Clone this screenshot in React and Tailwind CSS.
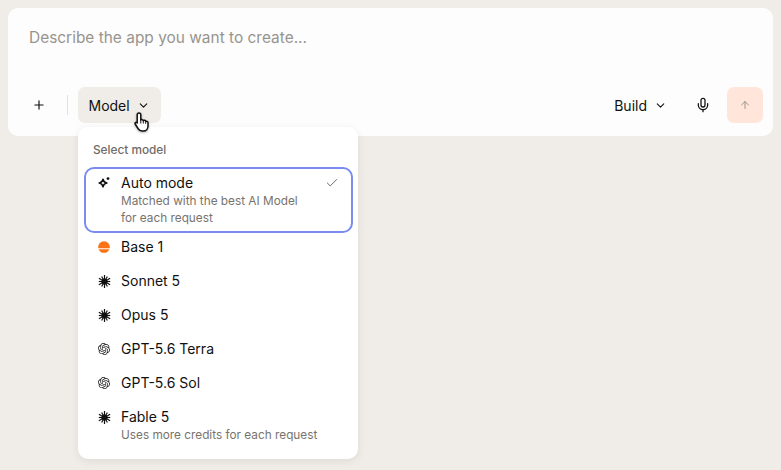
import React from "react";
import { Plus, ChevronDown, Mic, ArrowUp, Check } from "lucide-react";
import { SiOpenai } from "react-icons/si";

function Sparkle() {
  return (
    <svg width="14" height="14" viewBox="0 0 14 14" fill="none">
      <path d="M6 3.2 C6.4 5.6 7.4 6.6 9.8 7 C7.4 7.4 6.4 8.4 6 10.8 C5.6 8.4 4.6 7.4 2.2 7 C4.6 6.6 5.6 5.6 6 3.2 Z" stroke="#111" strokeWidth="1.6" strokeLinejoin="round" />
      <circle cx="11" cy="2.6" r="1.4" fill="#111" />
    </svg>
  );
}

function Orange() {
  return (
    <svg width="12" height="12" viewBox="0 0 12 12">
      <path d="M0.35 7.3 A5.8 5.8 0 1 1 11.65 7.3 Z" fill="#f97316" />
      <path d="M0.63 8.2 H11.37 A5.8 5.8 0 0 1 0.63 8.2 Z" fill="#f97316" />
    </svg>
  );
}

function Burst() {
  const rays = [0, 30, 60, 90, 120, 150, 180, 210, 240, 270, 300, 330];
  return (
    <svg width="13" height="13" viewBox="0 0 12 12">
      <circle cx="6" cy="6" r="2.8" fill="#111" />
      {rays.map((a) => (
        <line key={a} x1="6" y1="6" x2="6" y2={a % 60 === 0 ? 0 : 0.7} stroke="#111" strokeWidth="1.1" transform={`rotate(${a} 6 6)`} />
      ))}
    </svg>
  );
}

function Gpt() {
  return <SiOpenai size={12} color="#222" />;
}

function HandCursor({ className }) {
  return (
    <svg width="15" height="20" viewBox="0 0 15 20" className={className}>
      <path
        d="M5 1 C6 1 6.8 1.8 6.8 2.8 V8 C7.5 7.4 9 7.5 9.3 8.5 C10 8 11.4 8.2 11.7 9.3 C12.5 8.9 14 9.3 14 10.8 V14 C14 17 12 19 9.5 19 H8 C6 19 5 18 4 16.5 L1.2 12 C0.6 11 1.8 9.8 2.8 10.6 L3.2 11 V2.8 C3.2 1.8 4 1 5 1 Z"
        fill="#fff"
        stroke="#111"
        strokeWidth="1.5"
        strokeLinejoin="round"
      />
      <path d="M6.8 8 V11.5 M9.3 8.5 V11.5 M11.7 9.3 V11.8" stroke="#111" strokeWidth="1" fill="none" />
    </svg>
  );
}

function Row({ icon, name, sub, right }) {
  return (
    <div className="flex gap-[10px]">
      <div className="w-[14px] h-[20px] flex items-center justify-center shrink-0">{icon}</div>
      <div>
        <div className="text-[14px] leading-[20px] text-[#111]">{name}</div>
        {sub && <div className="text-[11.8px] leading-[17px] text-[#77736e]">{sub}</div>}
      </div>
      {right && <div className="ml-auto h-[20px] flex items-center">{right}</div>}
    </div>
  );
}

function Item(props) {
  return (
    <div className="px-[19px] py-[7px]">
      <Row {...props} />
    </div>
  );
}

export default function App() {
  return (
    <div className="relative w-[781px] h-[470px] overflow-hidden bg-[#f0ede8] p-2 font-['Inter',sans-serif]">
      {/* Prompt box */}
      <div className="h-[128px] bg-[#fdfdfd] rounded-[10px] pl-[15px] pr-[10px] pt-[19px] pb-[13px] flex flex-col justify-between">
        <div className="px-[6px] text-[15.45px] leading-[22px] text-[#98948e]">Describe the app you want to create...</div>
        <div className="flex items-center">
          <div className="w-[32px] h-[36px] flex items-center justify-center">
            <Plus size={14} strokeWidth={2} color="#111" />
          </div>
          <div className="w-px h-[20px] bg-[#e4e2de] ml-[12px] mr-[10px]" />
          <div className="h-[36px] w-[83px] rounded-[7px] bg-[#f0ede8] flex items-center pl-[10.5px] gap-[7px] text-[14px] text-[#111]">
            Model <ChevronDown size={13} strokeWidth={2} />
          </div>
          <div className="ml-auto flex items-center text-[14px] text-[#111]">
            <span>Build</span>
            <ChevronDown size={13} strokeWidth={2} className="ml-[7px]" />
            <Mic size={16} strokeWidth={1.9} className="ml-[28px]" />
            <div className="ml-[16px] w-[36px] h-[36px] rounded-[7px] bg-[#ffe5da] flex items-center justify-center">
              <ArrowUp size={12} strokeWidth={2} color="#9a9490" />
            </div>
          </div>
        </div>
      </div>

      {/* Model dropdown */}
      <div className="absolute left-[78px] top-[127px] w-[280px] h-[332px] bg-white rounded-[10px] shadow-[0_2px_8px_rgba(0,0,0,0.08)] pt-[13px]">
        <div className="px-[15px] text-[11.8px] leading-[20px] font-medium text-[#6f6b66]">Select model</div>
        <div className="ml-[6px] mt-[7px] h-[66px] w-[269px] border-2 border-[#7b8cf0] rounded-[10px] pl-[11px] pr-[12px] pt-[4px]">
          <Row
            icon={<Sparkle />}
            name="Auto mode"
            sub={<>Matched with the best AI Model<br />for each request</>}
            right={<Check size={14} strokeWidth={1.5} color="#555" />}
          />
        </div>
        <div className="-mt-[3px]">
          <Item icon={<Orange />} name="Base 1" />
          <Item icon={<Burst />} name="Sonnet 5" />
          <Item icon={<Burst />} name="Opus 5" />
          <Item icon={<Gpt />} name="GPT-5.6 Terra" />
          <Item icon={<Gpt />} name="GPT-5.6 Sol" />
          <Item icon={<Burst />} name="Fable 5" sub="Uses more credits for each request" />
        </div>
      </div>

      {/* Mouse cursor */}
      <HandCursor className="absolute left-[134px] top-[112px] drop-shadow-[0_1px_1px_rgba(0,0,0,0.3)]" />
    </div>
  );
}
